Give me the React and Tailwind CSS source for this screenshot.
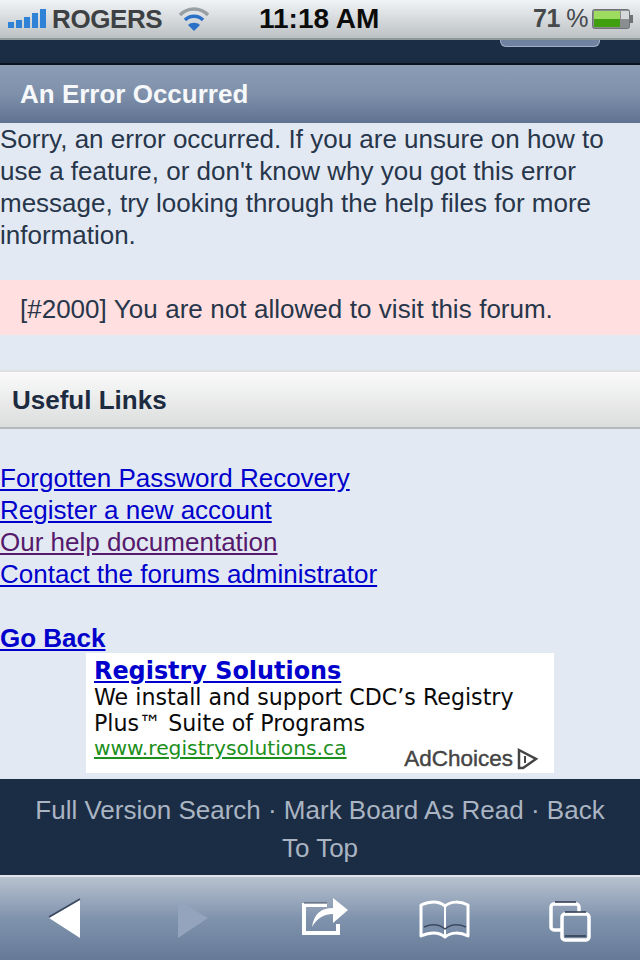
const StatusBar = () => {
  return (
    <div className="h-[40px] flex items-center bg-gradient-to-b from-[#f1f4f7] to-[#bcc1c3] border-b-2 border-[#8f9a98] pl-[8px] font-['Liberation_Sans',sans-serif]">
      <svg width="38" height="24" viewBox="0 0 38 24" className="shrink-0">
        <rect x="0" y="15" width="6" height="6" fill="#2f82d6" />
        <rect x="8" y="13" width="6" height="8" fill="#2f82d6" />
        <rect x="16" y="10" width="6" height="11" fill="#2f82d6" />
        <rect x="24" y="6" width="6" height="15" fill="#2f82d6" />
        <rect x="32" y="2" width="6" height="19" fill="#2f82d6" />
      </svg>
      <span className="ml-[6px] w-[126px] text-[26px] font-bold text-[#3d4144] tracking-[-0.4px]">ROGERS</span>
      <svg width="32" height="26" viewBox="0 0 32 26" className="shrink-0" fill="none">
        <path d="M2 9 C10 1 22 1 30 9" stroke="#98a0a4" strokeWidth="3.5" />
        <path d="M7 14 C12 9 20 9 25 14" stroke="#2b70c8" strokeWidth="3.5" />
        <path d="M16 25 L10 19 C13 16 19 16 22 19 Z" fill="#2b70c8" />
      </svg>
      <span className="ml-[49px] w-[274px] text-[28px] font-bold text-[#0b0b0b]">11:18 AM</span>
      <span className="w-[59px] text-[25px] font-bold tracking-[-0.5px] text-[#46494c] whitespace-nowrap">71 <span className="font-normal">%</span></span>
      <svg width="42" height="24" viewBox="0 0 42 24" className="shrink-0">
        <rect x="0.5" y="2.5" width="37" height="19" rx="2" fill="#8b8e90" stroke="#6f7274" />
        <rect x="29" y="4" width="8" height="8" fill="#d5d7d8" />
        <rect x="2" y="4" width="26" height="16" fill="#3f9f0e" />
        <rect x="2" y="4" width="26" height="8" fill="#9ddc5e" />
        <rect x="38" y="8" width="3" height="8" fill="#6f7274" />
      </svg>
    </div>
  );
};

const BottomBar = () => {
  return (
    <div className="h-[85px] flex items-start bg-gradient-to-b from-[#b8c1cf] via-[#8093ad] to-[#667a98] border-t-2 border-[#e0e3e7]">
      <svg width="640" height="83" viewBox="0 0 640 83" fill="none">
        {/* back */}
        <path d="M49 41 L80 23 L80 61 Z" fill="#fff" />
        <path d="M49 40 L80 22" stroke="#3c4a60" strokeWidth="1.5" />
        {/* forward, disabled */}
        <path d="M208 41 L178 23 L178 61 Z" fill="#93a4bc" />
        {/* share */}
        <path d="M327 28 H304 V56 H338 V47" stroke="#fff" strokeWidth="4" />
        <path d="M327 26 H304" stroke="#3c4a60" strokeWidth="1" />
        <path d="M312 50 C314 36 322 31 333 31 V21 L348 33 L333 46 V37 C324 37 317 41 312 50 Z" fill="#fff" />
        {/* bookmarks */}
        <path d="M421 28 C430 24 439 24 445 29 C451 24 460 24 468 28 V59 C460 55 451 55 445 60 C439 55 430 55 421 59 Z" stroke="#fff" strokeWidth="3" strokeLinejoin="round" />
        <path d="M445 29 V58" stroke="#fff" strokeWidth="2" />
        <path d="M424 50 C431 47 439 47 445 52 C451 47 459 47 466 50" stroke="#3c4a60" strokeWidth="1.5" />
        {/* tabs */}
        <path d="M562 53 H554 A3 3 0 0 1 551 50 V30 A3 3 0 0 1 554 27 H576 A3 3 0 0 1 579 30 V36" stroke="#fff" strokeWidth="3.5" />
        <path d="M555 25 H576" stroke="#2e3a4e" strokeWidth="1.5" />
        <rect x="562" y="37" width="27" height="26" rx="3" stroke="#fff" strokeWidth="3.5" />
        <path d="M565 35 H586 M565 59 H586" stroke="#2e3a4e" strokeWidth="1.5" />
      </svg>
    </div>
  );
};

const AdBox = () => {
  return (
    <div className="ml-[86px] w-[468px] h-[120px] bg-white pl-[8px] relative font-['DejaVu_Sans',sans-serif] text-[#0a0a0a]">
      <a href="#" className="block pt-[4px] h-[31px] text-[23.9px] leading-[28px] font-bold text-[#0000cc] underline">Registry Solutions</a>
      <p className="text-[22.15px] leading-[26px]">We install and support CDC’s Registry<br />Plus™ Suite of Programs</p>
      <a href="#" className="block text-[20.25px] leading-[24px] text-[#1c8f1c] underline">www.registrysolutions.ca</a>
      <div className="absolute right-[15px] bottom-[0px] flex items-center gap-[2px] font-['Liberation_Sans',sans-serif] text-[22.5px] leading-[28px] text-[#444] [-webkit-text-stroke:0.4px_#444]">
        AdChoices
        <svg width="24" height="24" viewBox="0 0 24 24" fill="none">
          <path d="M4 3 L21 12 L8 21 L4 21 Z" stroke="#444" strokeWidth="2.5" />
          <path d="M10 9 V16" stroke="#444" strokeWidth="2" />
        </svg>
      </div>
    </div>
  );
};

const App = () => {
  const links = [
    { label: "Forgotten Password Recovery", color: "text-[#0000cc]" },
    { label: "Register a new account", color: "text-[#0000cc]" },
    { label: "Our help documentation", color: "text-[#551a6b]" },
    { label: "Contact the forums administrator", color: "text-[#0000cc]" },
  ];

  return (
    <div className="w-[640px] h-[960px] overflow-hidden bg-[#e3e9f3] flex flex-col font-['Liberation_Sans',sans-serif] text-[#27364a]">
      <StatusBar />

      <div className="h-[25px] bg-[#1b2d44] border-b-2 border-[#0a1420] relative">
        <div className="absolute right-[40px] top-0 w-[100px] h-[7px] bg-[#6f83a1] border border-t-0 border-[#9fb0c6] rounded-b-[6px]" />
      </div>

      <h1 className="h-[58px] flex items-center pl-[20px] pt-[2px] text-[26px] font-bold text-[#f6f8fa] bg-gradient-to-b from-[#8c9db7] via-[#7e90aa] to-[#5f7290]">An Error Occurred</h1>

      <p className="text-[26px] leading-[32px] h-[157px]">
        Sorry, an error occurred. If you are unsure on how to use a feature, or don't know why you got this error message, try looking through the help files for more information.
      </p>

      <div className="h-[56px] flex items-center pl-[20px] pt-[4px] bg-[#ffdfdf] text-[26px] [word-spacing:0.3px]">[#2000] You are not allowed to visit this forum.</div>

      <div className="mt-[35px] h-[59px] flex items-center pl-[12px] pt-[2px] text-[26px] font-bold text-[#1c2b3f] bg-gradient-to-b from-[#fafafa] to-[#dcdddd] border-t-2 border-b-2 border-t-[#dfe0e2] border-b-[#b5b8ba]">Useful Links</div>

      <ul className="mt-[33px] text-[26px] leading-[32px]">
        {links.map((link) => (
          <li key={link.label}><a href="#" className={`underline ${link.color}`}>{link.label}</a></li>
        ))}
      </ul>
      <a href="#" className="mt-[32px] block h-[31px] text-[26px] leading-[32px] font-bold text-[#0000cc] underline">Go Back</a>

      <AdBox />

      <div className="mt-[6px] h-[96px] bg-[#1b2d44] text-[#aab4c2] text-[26px] leading-[38px] text-center pt-[12px] px-[30px]">
        Full Version Search · Mark Board As Read · Back To Top
      </div>

      <BottomBar />
    </div>
  );
};

export default App;
